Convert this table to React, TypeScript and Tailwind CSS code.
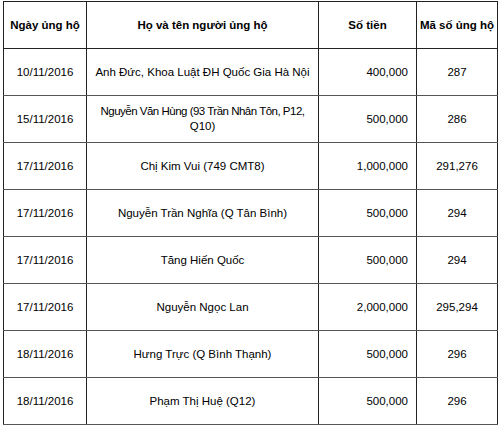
const ROWS = [
  { date: "10/11/2016", name: "Anh Đức, Khoa Luật ĐH Quốc Gia Hà Nội", amount: "400,000", code: "287" },
  { date: "15/11/2016", name: "Nguyễn Văn Hùng (93 Trần Nhân Tôn, P12,", name2: "Q10)", amount: "500,000", code: "286" },
  { date: "17/11/2016", name: "Chị Kim Vui (749 CMT8)", amount: "1,000,000", code: "291,276" },
  { date: "17/11/2016", name: "Nguyễn Trần Nghĩa (Q Tân Bình)", amount: "500,000", code: "294" },
  { date: "17/11/2016", name: "Tăng Hiến Quốc", amount: "500,000", code: "294" },
  { date: "17/11/2016", name: "Nguyễn Ngọc Lan", amount: "2,000,000", code: "295,294" },
  { date: "18/11/2016", name: "Hưng Trực (Q Bình Thạnh)", amount: "500,000", code: "296" },
  { date: "18/11/2016", name: "Phạm Thị Huệ (Q12)", amount: "500,000", code: "296" },
];

export default function App() {
  return (
    <div className="h-[427px] w-[500px] bg-white pl-[3px] pt-[1px] font-['Liberation_Sans',Arial,sans-serif] text-[11.5px] leading-[15px] text-black">
      <table className="w-[494px] table-fixed border-collapse">
        <colgroup>
          <col className="w-[83px]" />
          <col className="w-[232px]" />
          <col className="w-[98px]" />
          <col className="w-[81px]" />
        </colgroup>
        <thead>
          <tr className="h-[47px] font-bold">
            <th className="border border-[#222] p-0 text-center">Ngày ủng hộ</th>
            <th className="border border-[#222] p-0 text-center">Họ và tên người ủng hộ</th>
            <th className="border border-[#222] p-0 text-center">Số tiền</th>
            <th className="whitespace-nowrap border border-[#222] border-l-[#777] p-0 text-center">Mã số ủng hộ</th>
          </tr>
        </thead>
        <tbody>
          {ROWS.map((r, i) => (
            <tr key={i} className="h-[47px]">
              <td className="border border-[#222] border-y-[#555] p-0 text-center">{r.date}</td>
              <td className="whitespace-nowrap border border-[#222] border-y-[#555] px-2 py-0 text-center">
                {r.name2 ? (
                  <>
                    <span className="tracking-[-0.5px]">{r.name}</span>
                    <br />
                    {r.name2}
                  </>
                ) : (
                  r.name
                )}
              </td>
              <td className="border border-[#222] border-y-[#555] py-0 pl-1 pr-[8px] text-right">{r.amount}</td>
              <td className="border border-[#222] border-y-[#555] border-l-[#777] p-0 text-center">{r.code}</td>
            </tr>
          ))}
        </tbody>
      </table>
    </div>
  );
}
